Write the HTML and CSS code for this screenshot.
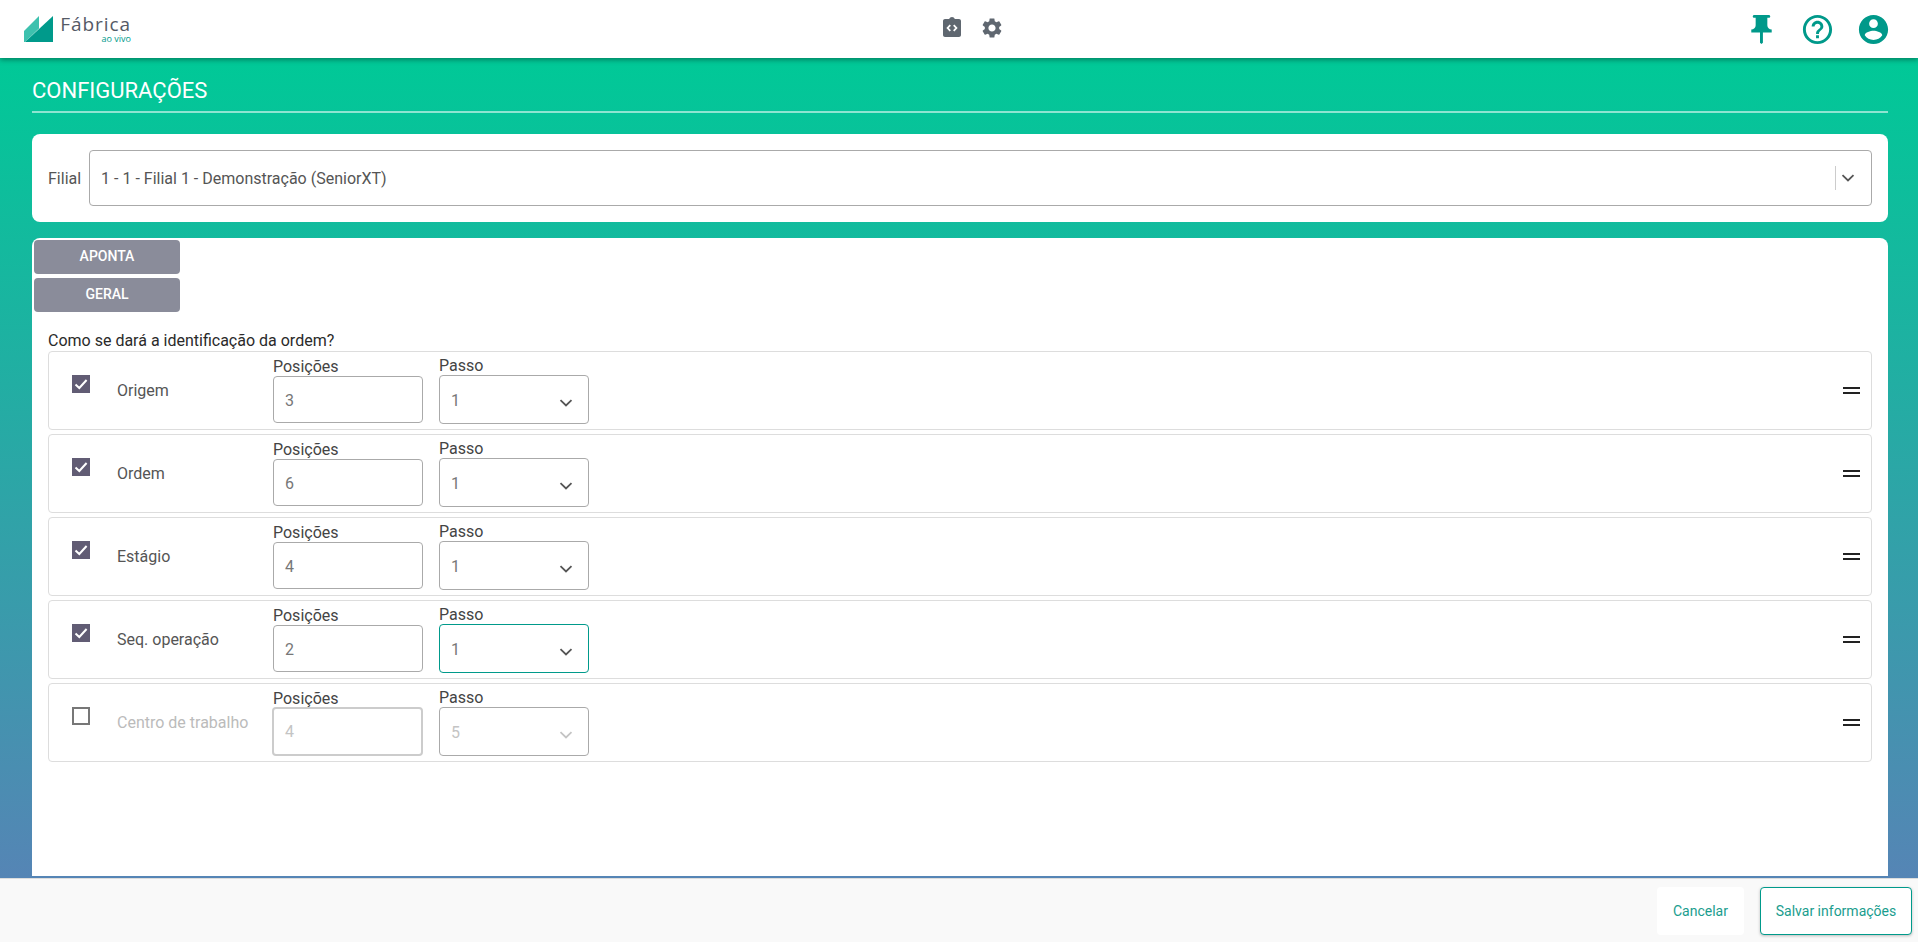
FILE: index.html
```html
<!DOCTYPE html>
<html lang="pt-BR">
<head>
<meta charset="utf-8">
<title>Configurações</title>
<link rel="stylesheet" href="styles.css">
</head>
<body>
<header class="topbar">
  <div class="brand">
    <svg class="brand-mark" viewBox="0 0 29 26" width="29" height="26">
      <polygon points="0,15 15,0 15,12.5 1,26 0,26" fill="#3dc1ae"/>
      <polygon points="29,0 29,26 1,26 15,13" fill="#009a8b"/>
    </svg>
    <div class="brand-text"><span class="brand-name">Fábrica</span><span class="brand-sub">ao vivo</span></div>
  </div>
  <nav class="center-icons">
    <svg class="icon-sm" viewBox="0 0 24 24"><path fill="#5f6770" d="M19 3h-4.18C14.4 1.84 13.3 1 12 1s-2.4.84-2.82 2H5c-1.1 0-2 .9-2 2v14c0 1.1.9 2 2 2h14c1.1 0 2-.9 2-2V5c0-1.1-.9-2-2-2z"/><path fill="none" stroke="#fff" stroke-width="1.8" d="M10.3 9.2 7.6 12l2.7 2.8M13.7 9.2l2.7 2.8-2.7 2.8"/></svg>
    <svg class="icon-sm" viewBox="0 0 24 24"><path fill="#5f6770" d="M19.14 12.94c.04-.3.06-.61.06-.94 0-.32-.02-.64-.07-.94l2.03-1.58c.18-.14.23-.41.12-.61l-1.92-3.32c-.12-.22-.37-.29-.59-.22l-2.39.96c-.5-.38-1.03-.7-1.62-.94l-.36-2.54c-.04-.24-.24-.41-.48-.41h-3.84c-.24 0-.43.17-.47.41l-.36 2.54c-.59.24-1.13.57-1.62.94l-2.39-.96c-.22-.08-.47 0-.59.22L2.74 8.87c-.12.21-.08.47.12.61l2.03 1.58c-.05.3-.09.63-.09.94s.02.64.07.94l-2.03 1.58c-.18.14-.23.41-.12.61l1.92 3.32c.12.22.37.29.59.22l2.39-.96c.5.38 1.03.7 1.62.94l.36 2.54c.05.24.24.41.48.41h3.84c.24 0 .44-.17.47-.41l.36-2.54c.59-.24 1.13-.56 1.62-.94l2.39.96c.22.08.47 0 .59-.22l1.92-3.32c.12-.22.07-.47-.12-.61l-2.01-1.58zM12 15.6c-1.98 0-3.6-1.62-3.6-3.6s1.62-3.6 3.6-3.6 3.6 1.62 3.6 3.6-1.62 3.6-3.6 3.6z"/></svg>
  </nav>
  <nav class="right-icons">
    <svg class="icon-lg" viewBox="0 0 24 24"><path fill="#00998a" d="M16 9V4h1c.55 0 1-.45 1-1s-.45-1-1-1H7c-.55 0-1 .45-1 1s.45 1 1 1h1v5c0 1.66-1.34 3-3 3v2h5.97v7l1 1 1-1v-7H19v-2c-1.66 0-3-1.34-3-3z"/></svg>
    <svg class="icon-lg" viewBox="0 0 24 24"><path fill="#00998a" d="M11 18h2v-2h-2v2zm1-16C6.48 2 2 6.48 2 12s4.48 10 10 10 10-4.48 10-10S17.52 2 12 2zm0 18c-4.41 0-8-3.59-8-8s3.59-8 8-8 8 3.59 8 8-3.59 8-8 8zm0-14c-2.21 0-4 1.79-4 4h2c0-1.1.9-2 2-2s2 .9 2 2c0 2-3 1.75-3 5h2c0-2.25 3-2.5 3-5 0-2.21-1.79-4-4-4z"/></svg>
    <svg class="icon-lg" viewBox="0 0 24 24"><path fill="#00998a" d="M12 2C6.48 2 2 6.48 2 12s4.48 10 10 10 10-4.48 10-10S17.52 2 12 2zm0 3c1.66 0 3 1.34 3 3s-1.34 3-3 3-3-1.34-3-3 1.34-3 3-3zm0 14.2c-2.5 0-4.71-1.28-6-3.22.03-1.99 4-3.08 6-3.08 1.99 0 5.97 1.09 6 3.08-1.29 1.94-3.5 3.22-6 3.22z"/></svg>
  </nav>
</header>

<main class="content">
  <h1 class="page-title">CONFIGURAÇÕES</h1>

  <section class="card filter-card">
    <span class="filter-label">Filial</span>
    <div class="filter-select">
      <span class="filter-value">1 - 1 - Filial 1 - Demonstração (SeniorXT)</span>
      <span class="filter-sep"></span>
      <svg class="chevron" viewBox="0 0 14 8"><path d="M1.5 1.2 7 6.4l5.5-5.2"/></svg>
    </div>
  </section>

  <section class="card settings-card">
    <button class="tab">APONTA</button>
    <button class="tab">GERAL</button>
    <p class="question">Como se dará a identificação da ordem?</p>
    <div class="rows">
      <div class="row">
        <span class="check is-on"><svg viewBox="0 0 18 18"><path d="M3.5 9.5 7.3 13 14.6 5"/></svg></span>
        <span class="row-label">Origem</span>
        <div class="field"><span class="field-label">Posições</span><div class="text-box">3</div></div>
        <div class="field field-select"><span class="field-label">Passo</span><div class="select-box"><span>1</span><svg class="chevron" viewBox="0 0 14 8"><path d="M1.5 1.2 7 6.4l5.5-5.2"/></svg></div></div>
        <span class="handle"></span>
      </div>
      <div class="row">
        <span class="check is-on"><svg viewBox="0 0 18 18"><path d="M3.5 9.5 7.3 13 14.6 5"/></svg></span>
        <span class="row-label">Ordem</span>
        <div class="field"><span class="field-label">Posições</span><div class="text-box">6</div></div>
        <div class="field field-select"><span class="field-label">Passo</span><div class="select-box"><span>1</span><svg class="chevron" viewBox="0 0 14 8"><path d="M1.5 1.2 7 6.4l5.5-5.2"/></svg></div></div>
        <span class="handle"></span>
      </div>
      <div class="row">
        <span class="check is-on"><svg viewBox="0 0 18 18"><path d="M3.5 9.5 7.3 13 14.6 5"/></svg></span>
        <span class="row-label">Estágio</span>
        <div class="field"><span class="field-label">Posições</span><div class="text-box">4</div></div>
        <div class="field field-select"><span class="field-label">Passo</span><div class="select-box"><span>1</span><svg class="chevron" viewBox="0 0 14 8"><path d="M1.5 1.2 7 6.4l5.5-5.2"/></svg></div></div>
        <span class="handle"></span>
      </div>
      <div class="row">
        <span class="check is-on"><svg viewBox="0 0 18 18"><path d="M3.5 9.5 7.3 13 14.6 5"/></svg></span>
        <span class="row-label">Seq. operação</span>
        <div class="field"><span class="field-label">Posições</span><div class="text-box">2</div></div>
        <div class="field field-select"><span class="field-label">Passo</span><div class="select-box is-focus"><span>1</span><svg class="chevron" viewBox="0 0 14 8"><path d="M1.5 1.2 7 6.4l5.5-5.2"/></svg></div></div>
        <span class="handle"></span>
      </div>
      <div class="row is-disabled">
        <span class="check"></span>
        <span class="row-label">Centro de trabalho</span>
        <div class="field"><span class="field-label">Posições</span><div class="text-box">4</div></div>
        <div class="field field-select"><span class="field-label">Passo</span><div class="select-box"><span>5</span><svg class="chevron" viewBox="0 0 14 8"><path d="M1.5 1.2 7 6.4l5.5-5.2"/></svg></div></div>
        <span class="handle"></span>
      </div>
    </div>
  </section>
</main>

<footer class="footer">
  <button class="btn-cancel">Cancelar</button>
  <button class="btn-save">Salvar informações</button>
</footer>
</body>
</html>
```

FILE: styles.css
```css
* { box-sizing: border-box; }
html, body { margin: 0; height: 100%; }
body {
  height: 942px;
  overflow: hidden;
  display: flex;
  flex-direction: column;
  font-family: Roboto, "Liberation Sans", sans-serif;
  font-size: 16px;
  color: #444;
  background: linear-gradient(180deg, #00c997 0%, #00c997 6%, #5585b5 93%);
}

/* header */
.topbar {
  height: 58px;
  flex: none;
  display: flex;
  align-items: center;
  background: #fff;
  box-shadow: 0 2px 5px rgba(0, 0, 0, .35);
  position: relative;
  z-index: 2;
}
.brand {
  width: 940px;
  padding-left: 24px;
  display: flex;
  align-items: center;
  gap: 8px;
}
.brand-mark { display: block; }
.brand-text { display: flex; flex-direction: column; align-items: flex-end; width: 70px; }
.brand-name { font-family: "Open Sans", sans-serif; font-size: 19px; font-weight: 500; line-height: 18px; letter-spacing: .95px; color: #555a66; }
.brand-sub { font-family: "Open Sans", sans-serif; font-size: 9px; line-height: 11px; color: #009a8b; }
.center-icons { display: flex; gap: 16px; margin-bottom: 2px; }
.icon-sm { width: 24px; height: 24px; display: block; }
.right-icons {
  flex: 1;
  display: flex;
  justify-content: flex-end;
  gap: 21px;
  padding-right: 27px;
}
.icon-lg { width: 35px; height: 35px; display: block; }

/* content */
.content {
  flex: 1;
  min-height: 0;
  padding: 0 30px 2px 32px;
  display: flex;
  flex-direction: column;
}
.page-title {
  flex: none;
  margin: 0 0 21px;
  height: 55px;
  padding-top: 20px;
  font-size: 22px;
  line-height: 26px;
  font-weight: 400;
  color: #fff;
  border-bottom: 2px solid rgba(255, 255, 255, .55);
}
.card { background: #fff; border-radius: 8px; }
.filter-card {
  flex: none;
  height: 88px;
  margin-bottom: 16px;
  padding: 16px;
  display: flex;
  align-items: center;
  gap: 8px;
}
.filter-label { color: #555; }
.filter-select {
  flex: 1;
  height: 56px;
  display: flex;
  align-items: center;
  padding: 0 16px 0 11px;
  border: 1px solid #aaa;
  border-radius: 4px;
}
.filter-value { flex: 1; color: #555; }
.filter-sep { width: 1px; height: 24px; background: #ccc; margin-right: 5px; }
.chevron { width: 14px; height: 8px; display: block; fill: none; stroke: #555; stroke-width: 1.8; }

.settings-card {
  flex: 1;
  min-height: 0;
  padding: 2px 16px 0 2px;
  border-radius: 8px 8px 0 0;
}
.tab {
  display: block;
  width: 146px;
  height: 34px;
  margin: 0 0 4px;
  padding: 0 0 2px;
  border: 0;
  border-radius: 4px;
  background: #8a8c9a;
  color: #fff;
  font: 500 14px Roboto, sans-serif;
}
.question {
  margin: 19px 0 0 14px;
  height: 20px;
  line-height: 20px;
  color: #2a2a2a;
}
.rows { margin: 0 0 0 14px; display: flex; flex-direction: column; gap: 4px; }
.row {
  height: 79px;
  display: grid;
  grid-template-columns: 68px 156px 166px 150px 1fr;
  border: 1px solid #ddd;
  border-radius: 4px;
  padding-right: 11px;
}
.check {
  width: 18px;
  height: 18px;
  margin: 23px 0 0 23px;
  border: 2px solid #777;
  background: #fff;
}
.check.is-on { background: #615c74; border: 0; }
.check svg { display: block; fill: none; stroke: #fff; stroke-width: 2; }
.row-label { align-self: center; color: #555; }
.field { display: flex; flex-direction: column; padding-top: 6px; }
.field-select { padding-top: 5px; }
.field-label { height: 18px; line-height: 18px; color: #444; }
.text-box {
  width: 150px;
  height: 47px;
  line-height: 47px;
  padding-left: 11px;
  border: 1px solid #aaa;
  border-radius: 4px;
  color: #777;
}
.select-box {
  height: 49px;
  padding: 0 15px 0 11px;
  display: flex;
  align-items: center;
  justify-content: space-between;
  border: 1px solid #aaa;
  border-radius: 4px;
  color: #777;
}
.select-box span { padding-top: 1px; }
.select-box .chevron { margin: 6px 0 0; }
.select-box.is-focus { border-color: #009a8b; }
.handle {
  justify-self: end;
  align-self: center;
  width: 17px;
  height: 7px;
  border-top: 2px solid #222;
  border-bottom: 2px solid #222;
}
.is-disabled .row-label { color: #bbb; }
.is-disabled .text-box { color: #c4c4c4; border: 2px solid #ccc; height: 49px; line-height: 45px; width: 151px; margin: -1px 0 0 -1px; }
.is-disabled .select-box { color: #c4c4c4; }
.is-disabled .chevron { stroke: #c4c4c4; }

/* footer */
.footer {
  flex: none;
  height: 64px;
  display: flex;
  justify-content: flex-end;
  align-items: center;
  gap: 16px;
  padding: 0 6px 0 0;
  background: #f9f9f9;
  border-top: 1px solid #ddd;
}
.btn-cancel, .btn-save {
  height: 48px;
  border-radius: 4px;
  font: 400 14px Roboto, sans-serif;
  color: #1a9d8e;
  background: #fff;
}
.btn-cancel { width: 87px; border: 0; }
.btn-save { width: 152px; border: 1px solid #009a8b; box-shadow: 0 1px 3px rgba(0, 0, 0, .25); }
```
